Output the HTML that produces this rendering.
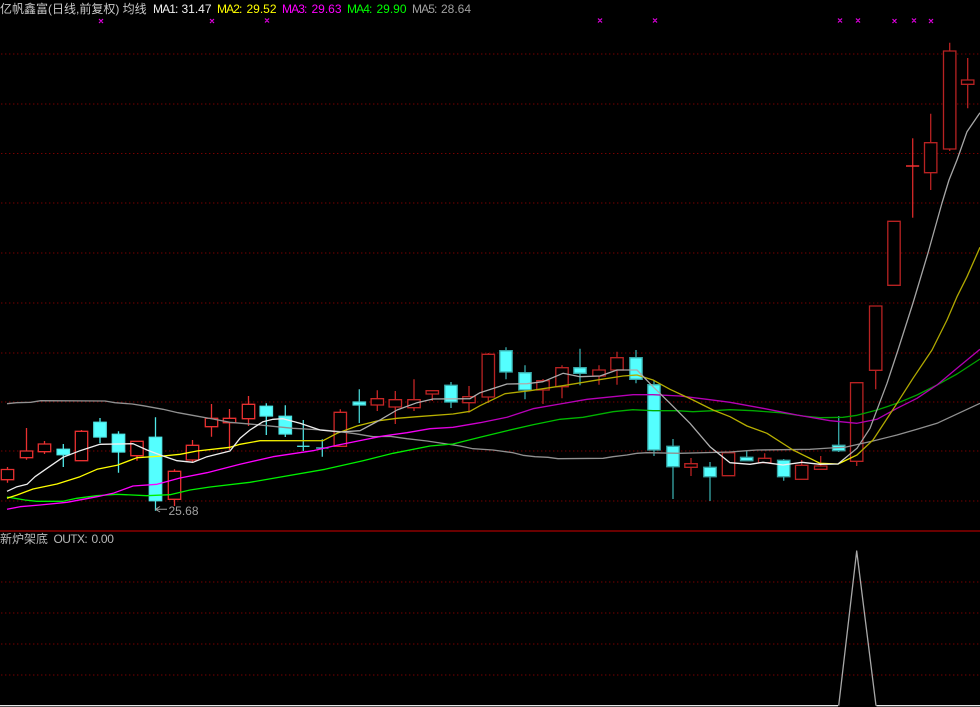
<!DOCTYPE html>
<html><head><meta charset="utf-8"><style>
html,body{margin:0;padding:0;background:#000}
#w{position:relative;width:980px;height:707px;overflow:hidden;background:#000;font-family:"Liberation Sans","WenQuanYi Zen Hei","Noto Sans CJK SC",sans-serif}
#w span{position:absolute;white-space:nowrap;font-size:12px;line-height:14px}
#w span.l{letter-spacing:-.9px}
svg{position:absolute;left:0;top:0}
</style></head><body><div id="w">
<svg width="980" height="707" viewBox="0 0 980 707" fill="none">
<defs>
<linearGradient id="gr" gradientUnits="userSpaceOnUse" x1="0" y1="0" x2="980" y2="0">
<stop offset=".27" stop-color="#e83030"/><stop offset=".33" stop-color="#d02828"/><stop offset=".5" stop-color="#b82222"/><stop offset="1" stop-color="#b82222"/>
</linearGradient>
<linearGradient id="gc" gradientUnits="userSpaceOnUse" x1="0" y1="0" x2="980" y2="0">
<stop offset=".27" stop-color="#50e8e8"/><stop offset=".5" stop-color="#38a8a8"/><stop offset="1" stop-color="#38a8a8"/>
</linearGradient>
<linearGradient id="g1" gradientUnits="userSpaceOnUse" x1="0" y1="0" x2="980" y2="0">
<stop offset=".33" stop-color="#eeeeee"/><stop offset=".36" stop-color="#b0b0b0"/><stop offset=".72" stop-color="#a8a8a8"/><stop offset=".74" stop-color="#f0f0f0"/><stop offset=".855" stop-color="#f0f0f0"/><stop offset=".87" stop-color="#a0a0a0"/><stop offset="1" stop-color="#a8a8a8"/>
</linearGradient>
<linearGradient id="g2" gradientUnits="userSpaceOnUse" x1="0" y1="0" x2="980" y2="0">
<stop offset=".25" stop-color="#ffff00"/><stop offset=".33" stop-color="#c8c000"/><stop offset=".5" stop-color="#b0a800"/><stop offset=".82" stop-color="#b8b000"/><stop offset=".84" stop-color="#ffff00"/><stop offset=".86" stop-color="#ffff00"/><stop offset=".88" stop-color="#b0a800"/><stop offset="1" stop-color="#b0a800"/>
</linearGradient>
<linearGradient id="g3" gradientUnits="userSpaceOnUse" x1="0" y1="0" x2="980" y2="0">
<stop offset=".4" stop-color="#ff00ff"/><stop offset=".52" stop-color="#b800b8"/><stop offset="1" stop-color="#b000b0"/>
</linearGradient>
<linearGradient id="g4" gradientUnits="userSpaceOnUse" x1="0" y1="0" x2="980" y2="0">
<stop offset=".42" stop-color="#00f000"/><stop offset=".6" stop-color="#00b000"/><stop offset="1" stop-color="#00a000"/>
</linearGradient>
</defs>
<g stroke="#7a0000" stroke-width="1" stroke-dasharray="1.4 2.6">
<path d="M1 54H980M1 104H980M1 153.5H980M1 203H980M1 253H980M1 303H980M1 353H980M1 402H980M1 451H980M1 501H980M1 582H980M1 613H980M1 644H980M1 675H980"/>
</g>
<path d="M0 531H980" stroke="#a80000" stroke-width="1.3"/>
<g stroke="url(#gr)" stroke-width="1.3">
<path d="M7.5 467V482.7M26.5 428V459.7M44.5 441V454M81.5 430V460.7M137 441V460.7M174.5 469.3V506M192.5 440V462M211.5 404V436.7M229.5 409V450M248.5 396V426M340.3 409.3V446M377.3 390.3V411M395.3 391V424M414 379.3V411M432.3 390V401M469 386V412.7M488.3 353V403M543 379V404M562 365.3V398.3M599 365.3V384.7M617 351.7V384.7M691 458V476M764.7 453.3V460M801.7 460V470M820.7 456V469M856.7 440V466M875.7 360V389.3M930.7 113.7V190M949.7 42.7V151M967.7 58V108.3"/>
<path fill="#000" d="M1.3 469.5h12.4v10.2h-12.4zM20.3 451h12.4v6.7h-12.4zM38.3 444h12.4v7.7h-12.4zM75.3 431.3h12.4v29.4h-12.4zM130.8 441.3h12.4v14.4h-12.4zM168.3 471.3h12.4v28h-12.4zM186.3 445.3h12.4v14.7h-12.4zM205.3 418.3h12.4v8.4h-12.4zM223.3 418.3h12.4v4.4h-12.4zM242.3 404.3h12.4v14.4h-12.4zM334.1 412.3h12.4v34h-12.4zM371.1 398.7h12.4v6.3h-12.4zM389.1 399.7h12.4v7.3h-12.4zM407.8 399.7h12.4v8h-12.4zM426.1 390.7h12.4v3.3h-12.4zM462.8 396.7h12.4v6h-12.4zM482.1 354.3h12.4v42.7h-12.4zM536.8 380.7h12.4v9.3h-12.4zM555.8 367.7h12.4v19h-12.4zM592.8 370h12.4v6h-12.4zM610.8 357.7h12.4v12.3h-12.4zM684.8 463.7h12.4v3.6h-12.4zM722.3 452.7h12.4v23h-12.4zM758.5 458.3h12.4v4.4h-12.4zM795.5 465.3h12.4v14h-12.4zM814.5 466h12.4v3.3h-12.4zM850.5 382.7h12.4v78.6h-12.4zM869.5 306h12.4v64.3h-12.4zM887.8 221.3h12.4v64h-12.4zM924.5 142.7h12.4v30h-12.4zM943.5 51h12.4v98h-12.4zM961.5 80h12.4v4.3h-12.4z"/>
</g>
<path d="M912.7 138.3V217.7" stroke="#d82828" stroke-width="1.3"/>
<path d="M906 166H919.2" stroke="#f03030" stroke-width="1.5"/>
<g stroke="url(#gc)" stroke-width="1.3">
<path d="M63.3 444V467M100 418V443M118.5 431.3V472.7M155.5 417.3V510.7M266.3 403.3V435M285.3 405.3V437M303.3 420V451M322.3 439.3V456.7M359.3 389.3V423M451 382V408M506 347.3V379.3M525 365.3V399.3M580 348.7V385.3M636 350V383.3M654 380V456M673 439V499M710 462V501M746.7 451V460M783.7 459V480.7M838.7 416V452"/>
<path fill="#54ffff" d="M57.1 449.3h12.4v5.4h-12.4zM93.8 422.3h12.4v14.7h-12.4zM112.3 434.3h12.4v17.7h-12.4zM149.3 437.3h12.4v63.4h-12.4zM260.1 406.3h12.4v9.7h-12.4zM279.1 416.3h12.4v17.7h-12.4zM353.1 402h12.4v3h-12.4zM444.8 385.3h12.4v16.7h-12.4zM499.8 350.7h12.4v21.3h-12.4zM518.8 372.7h12.4v17.3h-12.4zM573.8 367.7h12.4v5.6h-12.4zM629.8 357.7h12.4v21.6h-12.4zM647.8 384.7h12.4v65.3h-12.4zM666.8 446.3h12.4v20.4h-12.4zM703.8 467.3h12.4v9.4h-12.4zM740.5 457.3h12.4v3.4h-12.4zM777.5 460.3h12.4v16.4h-12.4zM832.5 445.3h12.4v5.4h-12.4z"/>
<path d="M297.1 446.3h12.4M316.1 448h12.4"/>
</g>
<g stroke-width="1.3" stroke-linejoin="round">
<path stroke="#909090" d="M7 403.7L16.7 402.7L30.7 402.3L40.7 400.7L105 401L115 402.7L132 404L143 405.7L163 409.3L178 412.7L200 416.7L213 419L230 422.3L253 424.3L273 426.3L293 428.3L323 430L340 431.7L355 433.7L373 436.7L390 436.3L407 438.7L427 441L447 444L460 446L473 448.7L493 450L513 452.7L523 455.3L535 456.7L548 457.3L558 458.7L603 458.3L613 456.7L627 455L637 453.3L647 452.7L680 453.3L730 452L747 450.7L757 450L810 449.3L830 448L845 447.3L873 441L897 435L917 429.3L937 423.3L980 403.3"/>
<path stroke="url(#g4)" d="M7 497L25 500L36.7 501.3L63 501.3L76.7 498.3L96.7 495.7L116.7 494.3L146.7 495.7L170 494.7L190 490L210 487L250 482.3L325 469.3L363 460.7L393 453.3L430 446L453 444L480 437.3L507 430.7L533 424.7L560 419.3L583 417.3L613 411.7L633 409.7L653 410.7L677 410.7L693 411.7L713 410.7L730 409.7L753 410.7L780 412.7L803 416L820 417.7L843 417.3L857 415.3L877 410L897 403.3L917 395L937 385L957 374L980 359"/>
<path stroke="url(#g3)" d="M7 509.3L20 506.7L40 505L67 502.3L97 496.7L113 493.3L133 486L157 484.3L180 478L207 472.7L240 464.3L273 456.7L313 450.7L337 445.3L363 440L383 436L407 432.7L430 428.7L453 427.3L480 422.7L507 417.3L533 408.7L560 404L587 399.3L613 396.7L633 394.7L653 394.7L680 396L707 399.3L730 402.3L763 408.3L797 415L830 420.7L857 423.3L877 419.3L897 408.3L917 398.3L937 385L957 368.3L980 349.3"/>
<path stroke="url(#g2)" d="M7 498.3L17 495L33 489L57 484L80 476.7L97 469.3L117 465.3L137 457.7L163 456L180 454.3L197 451L230 447.3L240 444.3L260 440.7L323 440.7L337 433.3L357 426L377 421L397 418.3L417 416.7L453 414L470 411.3L480 405.7L505 393.7L530 390.7L563 385.7L593 380.7L623 376L637 375L653 380L670 389.3L693 400L713 410L730 416.7L747 426L767 433.3L793 450L820 463.3L838 464L857 455L873 440L897 403.3L913 378.3L932 350L947 320L957 296.7L967 276.7L980 247.3"/>
<path stroke="url(#g1)" d="M7 491.3L17 486.7L27 484.3L35 476.7L47 468.3L63 457.3L80 450.7L100 444.3L133 443.7L147 450L163 456L177 460.7L193 462.3L207 456.7L230 451L240 438.3L250 430L263 421.7L273 419.3L283 418.7L300 423.3L320 430L340 432L360 430.7L380 420L397 410L417 402.7L433 399L470 398.7L480 392.7L507 384L527 383.7L543 381.7L563 373.3L580 376.7L600 376L617 370L637 370L653 386.7L670 403.3L690 423.3L710 446.7L730 462.7L750 464.3L763 462.3L783 465L802 462.3L820 464.3L838 464L857 448.3L870 428.3L887 383.3L898 350L913 303L928 253L942 203L949 180L957 160L967 131.7L980 112.7"/>
<path stroke="#a8a8a8" d="M838.7 705.7L856.7 551L876 705.7"/>
<path stroke="#e8e8e8" d="M0 705.7H838M876.5 705.7H980"/>
<path stroke="#a0a0a0" stroke-width="1" d="M155.5 509.3H167M155.5 509.3L160 506.5M155.5 509.3L160 512"/>
</g>
<g stroke="#e000e0" stroke-width="1.2">
<path d="M99 19L103 23M103 19L99 23M210 19L214 23M214 19L210 23M265 18.5L269 22.5M269 18.5L265 22.5M598 18.5L602 22.5M602 18.5L598 22.5M653 18.5L657 22.5M657 18.5L653 22.5M838 18.5L842 22.5M842 18.5L838 22.5M856 18.5L860 22.5M860 18.5L856 22.5M892.5 19L896.5 23M896.5 19L892.5 23M912 18.5L916 22.5M916 18.5L912 22.5M929 19L933 23M933 19L929 23"/>
</g>
</svg>
<span style="left:0;top:2px;color:#c8c8c8">亿帆鑫富(日线,前复权) 均线</span>
<span class="l" style="left:153px;top:2px;color:#f0f0f0">MA1:</span><span style="left:181.5px;top:2px;color:#f0f0f0">31.47</span>
<span class="l" style="left:217px;top:2px;color:#ffff00">MA2:</span><span style="left:246.5px;top:2px;color:#ffff00">29.52</span>
<span class="l" style="left:282px;top:2px;color:#ff00ff">MA3:</span><span style="left:311.5px;top:2px;color:#ff00ff">29.63</span>
<span class="l" style="left:347px;top:2px;color:#00ff00">MA4:</span><span style="left:376.5px;top:2px;color:#00ff00">29.90</span>
<span class="l" style="left:412px;top:2px;color:#a0a0a0">MA5:</span><span style="left:441px;top:2px;color:#a0a0a0">28.64</span>
<span style="left:168.5px;top:504px;color:#a0a0a0">25.68</span>
<span style="left:0;top:532px;color:#b8b8b8">新炉架底</span>
<span class="l" style="left:53.5px;top:532px;color:#b8b8b8;letter-spacing:-.6px">OUTX:</span><span style="left:91.5px;top:532px;color:#b8b8b8;letter-spacing:-.3px">0.00</span>
</div></body></html>
